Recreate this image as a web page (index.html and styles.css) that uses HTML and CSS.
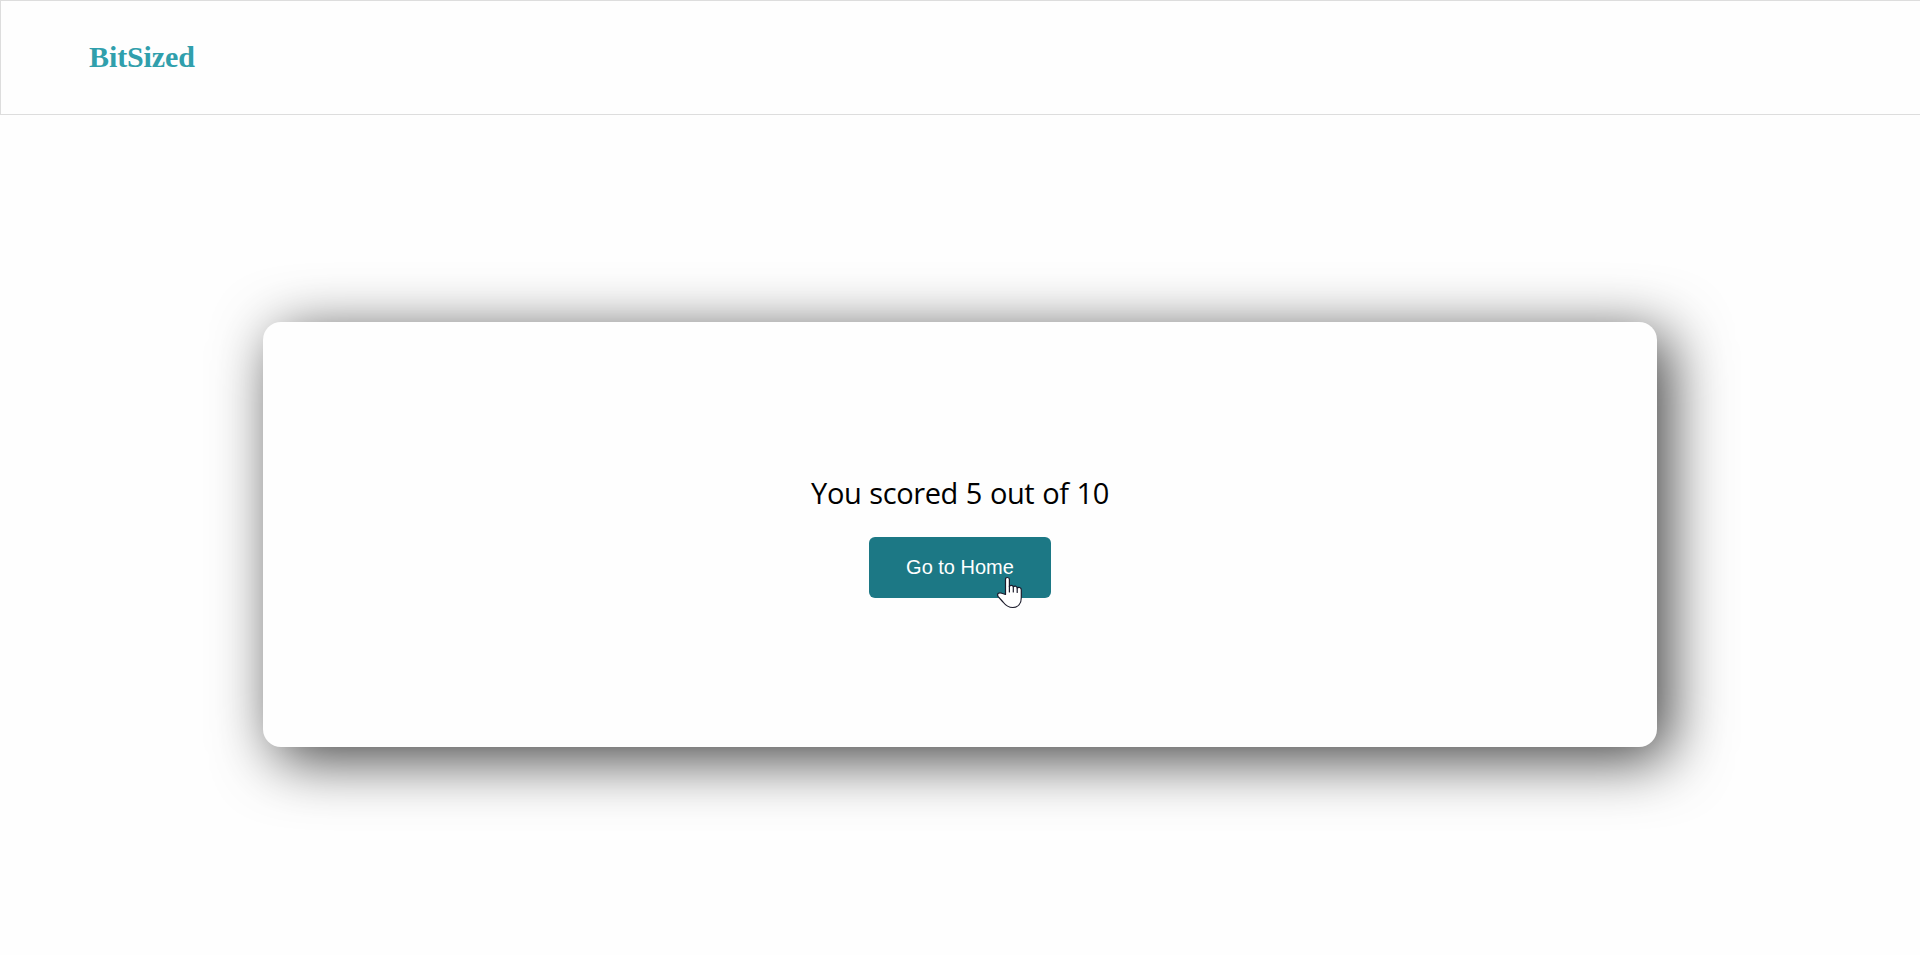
FILE: index.html
```html
<!DOCTYPE html>
<html lang="en">
<head>
<meta charset="utf-8">
<title>BitSized</title>
<link rel="stylesheet" href="styles.css">
</head>
<body>
<header class="navbar"><a class="brand">BitSized</a></header>
<main class="page">
  <section class="result-card">
    <p class="score">You scored 5 out of 10</p>
    <button class="home-button" type="button">Go to Home
      <svg class="pointer" width="27" height="34" viewBox="0 0 27 34" aria-hidden="true">
        <path d="M8.5 18.5V3.5Q8.5 1.5 10.4 1.5T12.4 3.5V10.5Q12.8 9.2 14.4 9.3Q16 9.4 16.3 11Q17.2 9.8 18.7 10.2Q20 10.6 20.2 12Q21.1 11 22.7 11.5Q24.3 12 24.3 14V21.5C24.3 28 20.8 31.5 15.8 31.5C11.8 31.5 8.7 29.5 6 26L1.2 20.6Q-.1 18.5 1.4 17.3Q3 16.3 4.8 17.3Z"/>
        <path d="M12.4 10V16M16.3 11V16M20.2 12V16.5"/>
      </svg>
    </button>
  </section>
</main>
</body>
</html>
```
FILE: styles.css
```css
* {
  box-sizing: border-box;
}

body {
  margin: 0;
  height: 955px;
  overflow: hidden;
  display: flex;
  flex-direction: column;
  background: #fefefe;
}

.navbar {
  height: 115px;
  flex: none;
  display: flex;
  align-items: center;
  padding: 0 88px 2px;
  border: 1px solid #ddd;
  border-right: 0;
}

.brand {
  color: #309fac;
  font: bold 30px/34px "Liberation Serif", "Times New Roman", serif;
  letter-spacing: -0.1px;
}

.page {
  flex: 1;
  display: flex;
  justify-content: center;
  align-items: flex-start;
  padding-top: 207px;
}

.result-card {
  width: 1394px;
  height: 425px;
  padding-top: 151px;
  display: flex;
  flex-direction: column;
  align-items: center;
  gap: 24px;
  border-radius: 18px;
  background: #fefefe;
  box-shadow: 12px 12px 60px rgba(0, 0, 0, 0.75);
}

.score {
  margin: 0;
  color: #000;
  font: 400 29px/40px "Segoe UI", "Open Sans", sans-serif;
  letter-spacing: -0.4px;
  word-spacing: 0.8px;
  white-space: nowrap;
}

.home-button {
  position: relative;
  width: 182px;
  height: 61px;
  padding: 0;
  border: 0;
  border-radius: 6px;
  background: #1c7885;
  color: #fff;
  font: 20px/23px "Liberation Sans", Arial, sans-serif;
}

.pointer {
  position: absolute;
  left: 128px;
  top: 39px;
  fill: #fff;
  stroke: #1b1b2b;
  stroke-width: 1.2;
  stroke-linejoin: round;
  stroke-linecap: round;
}
```
